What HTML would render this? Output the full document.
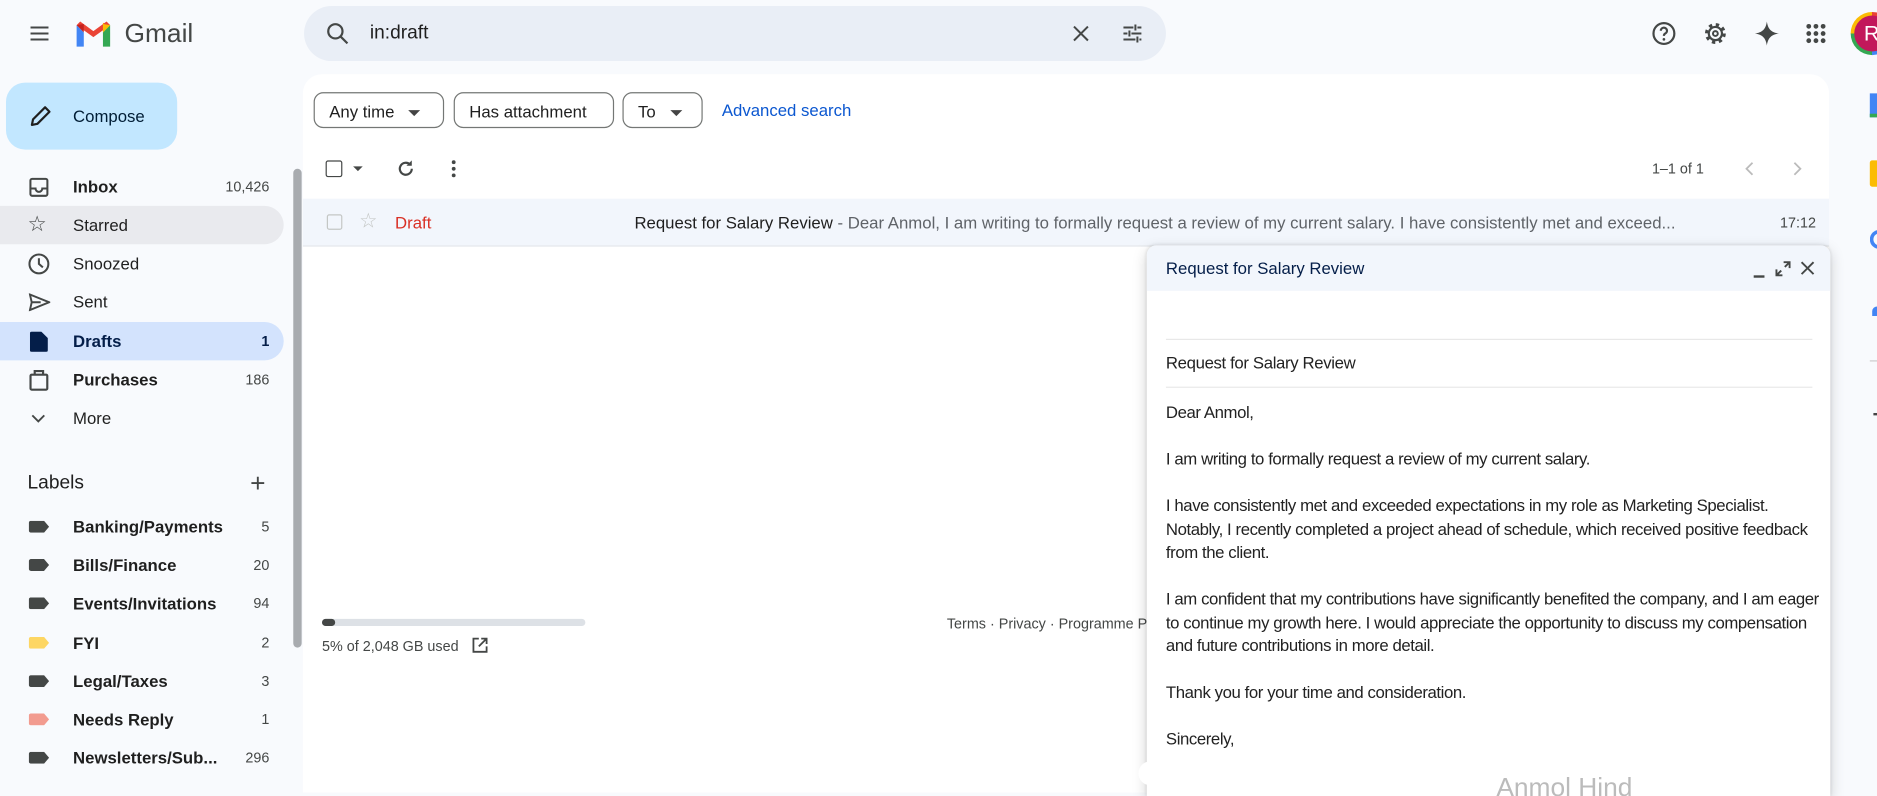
<!DOCTYPE html>
<html><head><meta charset="utf-8"><style>
html,body{margin:0;padding:0;width:1877px;height:780px;overflow:hidden;background:#f8fafd;}
#w{position:absolute;left:0;top:0;width:1568px;height:652px;transform:scale(1.19706);transform-origin:0 0;font-family:"Liberation Sans",Arial,sans-serif;color:#1f1f1f;}
.a{position:absolute;}
.nav{position:absolute;left:0;width:237px;height:32px;border-radius:0 16px 16px 0;}
.nt{position:absolute;left:61px;top:0;line-height:32px;font-size:14px;color:#1f1f1f;}
.nc{position:absolute;right:12px;top:0;line-height:32px;font-size:12px;color:#444746;}
.b{font-weight:bold;}
.lab{position:absolute;left:24px;top:11px;width:17px;height:10px;border-radius:2px 0 0 2px;clip-path:polygon(0 0,75% 0,100% 50%,75% 100%,0 100%);}
.chip{position:absolute;top:77px;height:30px;border:1px solid #747775;border-radius:8px;font-size:14px;line-height:30px;color:#1f1f1f;box-sizing:border-box;padding-left:12px;}
.car{display:inline-block;width:0;height:0;border-left:5px solid transparent;border-right:5px solid transparent;border-top:5px solid #444;margin-left:12px;vertical-align:middle;}
.body p{margin:0;font-size:14px;line-height:19.5px;color:#222;letter-spacing:-0.35px;white-space:nowrap;font-family:Arial,"Liberation Sans",sans-serif;}
</style></head><body><div id="w">
<svg class="a" style="left:23px;top:18px" width="20" height="20" viewBox="0 0 24 24"><path d="M3 6h18M3 12h18M3 18h18" stroke="#444746" stroke-width="2"/></svg>
<svg class="a" style="left:62px;top:17px" width="32" height="24" viewBox="0 0 32 24"><path d="M2 4v18h6V10z" fill="#4285f4"/><path d="M24 10v12h6V4z" fill="#34a853"/><path d="M24 2l6 2v0l-6 6z" fill="#fbbc04"/><path d="M2 4l14 10 14-10-3-3-11 8L5 1z" fill="#ea4335"/><path d="M30 4l-6 6V3z" fill="#fbbc04"/><path d="M2 4l6 6V3z" fill="#c5221f"/></svg>
<div class="a" style="left:104px;top:15px;font-size:22px;color:#444746;">Gmail</div>
<div class="a" style="left:254px;top:5px;width:720px;height:46px;border-radius:24px;background:#e9eef6;"></div>
<svg class="a" style="left:271px;top:17px" width="22" height="22" viewBox="0 0 24 24"><circle cx="10" cy="10" r="6.5" fill="none" stroke="#444746" stroke-width="2"/><path d="M15 15l6 6" stroke="#444746" stroke-width="2"/></svg>
<div class="a" style="left:309px;top:19px;font-size:16px;color:#1f1f1f;">in:draft</div>
<svg class="a" style="left:893px;top:18px" width="20" height="20" viewBox="0 0 24 24"><path d="M5 5l14 14M19 5L5 19" stroke="#444746" stroke-width="2"/></svg>
<svg class="a" style="left:936px;top:18px" width="20" height="20" viewBox="0 0 24 24"><path d="M3 6h10M17 6h4M3 12h4M11 12h10M3 18h12M19 18h2M15 3v6M9 9v6M17 15v6" stroke="#444746" stroke-width="2"/></svg>
<svg class="a" style="left:1379px;top:17px" width="22" height="22" viewBox="0 0 24 24"><circle cx="12" cy="12" r="9.5" fill="none" stroke="#444746" stroke-width="2"/><path d="M9.2 9.5a2.8 2.8 0 1 1 4 2.5c-1 .5-1.2 1.2-1.2 2.2" fill="none" stroke="#444746" stroke-width="2"/><circle cx="12" cy="17.3" r="1.2" fill="#444746"/></svg>
<svg class="a" style="left:1422px;top:17px" width="22" height="22" viewBox="0 0 24 24"><circle cx="12" cy="12" r="8" fill="none" stroke="#444746" stroke-width="3" stroke-dasharray="3 3.3"/><circle cx="12" cy="12" r="6" fill="none" stroke="#444746" stroke-width="2"/><circle cx="12" cy="12" r="2.2" fill="none" stroke="#444746" stroke-width="1.8"/></svg>
<svg class="a" style="left:1465px;top:17px" width="22" height="22" viewBox="0 0 24 24"><path d="M12 1C13 8 16 11 23 12 16 13 13 16 12 23 11 16 8 13 1 12 8 11 11 8 12 1z" fill="#444746"/></svg>
<svg class="a" style="left:1508px;top:19px" width="18" height="18" viewBox="0 0 18 18" fill="#444746"><circle cx="3" cy="3" r="2"/><circle cx="9" cy="3" r="2"/><circle cx="15" cy="3" r="2"/><circle cx="3" cy="9" r="2"/><circle cx="9" cy="9" r="2"/><circle cx="15" cy="9" r="2"/><circle cx="3" cy="15" r="2"/><circle cx="9" cy="15" r="2"/><circle cx="15" cy="15" r="2"/></svg>
<div class="a" style="left:1546px;top:10px;width:36px;height:36px;border-radius:50%;background:conic-gradient(#ea4335 0 25%,#4285f4 25% 50%,#34a853 50% 75%,#fbbc04 75%);"></div>
<div class="a" style="left:1549px;top:13px;width:30px;height:30px;border-radius:50%;background:#c2185b;color:#fff;font-size:18px;line-height:30px;text-indent:8px;">R</div>
<div class="a" style="left:5px;top:69px;width:143px;height:56px;border-radius:16px;background:#c2e7ff;"></div>
<svg class="a" style="left:23px;top:86px" width="22" height="22" viewBox="0 0 24 24"><path d="M4 20l1-5L16 4l4 4L9 19z" fill="none" stroke="#1f1f1f" stroke-width="2" stroke-linejoin="round"/></svg>
<div class="a" style="left:61px;top:89px;font-size:14px;font-weight:500;color:#001d35;">Compose</div>
<div class="nav" style="top:140px"><svg class="a" style="left:24px;top:8px" width="17" height="17" viewBox="0 0 18 18"><rect x="1.5" y="1.5" width="15" height="15" rx="1.5" fill="none" stroke="#444746" stroke-width="1.8"/><path d="M2 10h4a3 3 0 0 0 6 0h4" fill="none" stroke="#444746" stroke-width="1.8"/></svg><span class="nt b">Inbox</span><span class="nc">10,426</span></div>
<div class="nav" style="top:172px;background:#e9eaee"><span class="a" style="left:23px;top:5px;font-size:18px;color:#444746;">☆</span><span class="nt">Starred</span></div>
<div class="nav" style="top:204px"><svg class="a" style="left:23px;top:7px" width="19" height="19" viewBox="0 0 20 20"><circle cx="10" cy="10" r="8.3" fill="none" stroke="#444746" stroke-width="1.8"/><path d="M10 5v5l3.5 3" fill="none" stroke="#444746" stroke-width="1.8"/></svg><span class="nt">Snoozed</span></div>
<div class="nav" style="top:236px"><svg class="a" style="left:24px;top:9px" width="18" height="15" viewBox="0 0 18 15"><path d="M1 1l16 6.5L1 14l1.5-6.5z M2.5 7.5H10" fill="none" stroke="#444746" stroke-width="1.6"/></svg><span class="nt">Sent</span></div>
<div class="nav" style="top:269px;background:#d3e3fd"><svg class="a" style="left:25px;top:8px" width="15" height="17" viewBox="0 0 15 17"><path d="M1.5 0h8L15 5.5V15.5a1.5 1.5 0 0 1-1.5 1.5h-12A1.5 1.5 0 0 1 0 15.5V1.5A1.5 1.5 0 0 1 1.5 0z" fill="#041e49"/></svg><span class="nt b" style="color:#041e49">Drafts</span><span class="nc b" style="color:#041e49">1</span></div>
<div class="nav" style="top:301px"><svg class="a" style="left:24px;top:7px" width="17" height="19" viewBox="0 0 17 19"><rect x="1.5" y="5" width="14" height="12.5" rx="1" fill="none" stroke="#444746" stroke-width="1.8"/><path d="M5 5V2h7v3" fill="none" stroke="#444746" stroke-width="1.8"/></svg><span class="nt b">Purchases</span><span class="nc">186</span></div>
<div class="nav" style="top:333px"><svg class="a" style="left:26px;top:13px" width="12" height="8" viewBox="0 0 12 8"><path d="M1 1l5 5 5-5" fill="none" stroke="#444746" stroke-width="1.6"/></svg><span class="nt">More</span></div>
<div class="a" style="left:23px;top:395px;font-size:16px;color:#1f1f1f;">Labels</div>
<div class="a" style="left:209px;top:391px;font-size:22px;color:#444746;font-weight:300;">+</div>
<div class="nav" style="top:424px"><span class="lab" style="background:#444746"></span><span class="nt b">Banking/Payments</span><span class="nc">5</span></div>
<div class="nav" style="top:456px"><span class="lab" style="background:#444746"></span><span class="nt b">Bills/Finance</span><span class="nc">20</span></div>
<div class="nav" style="top:488px"><span class="lab" style="background:#444746"></span><span class="nt b">Events/Invitations</span><span class="nc">94</span></div>
<div class="nav" style="top:521px"><span class="lab" style="background:#fdd663"></span><span class="nt b">FYI</span><span class="nc">2</span></div>
<div class="nav" style="top:553px"><span class="lab" style="background:#444746"></span><span class="nt b">Legal/Taxes</span><span class="nc">3</span></div>
<div class="nav" style="top:585px"><span class="lab" style="background:#f29b8f"></span><span class="nt b">Needs Reply</span><span class="nc">1</span></div>
<div class="nav" style="top:617px"><span class="lab" style="background:#444746"></span><span class="nt b">Newsletters/Sub...</span><span class="nc">296</span></div>
<div class="a" style="left:245px;top:141px;width:7px;height:400px;border-radius:4px;background:#a8abaf;"></div>
<div class="a" style="left:253px;top:62px;width:1275px;height:600px;background:#fff;border-radius:16px 16px 0 0;"></div>
<div class="chip" style="left:262px;width:109px;">Any time<span class="car"></span></div>
<div class="chip" style="left:379px;width:134px;">Has attachment</div>
<div class="chip" style="left:520px;width:67px;">To<span class="car"></span></div>
<div class="a" style="left:603px;top:84px;font-size:14px;color:#0b57d0;font-weight:500;">Advanced search</div>
<div class="a" style="left:272px;top:134px;width:12px;height:12px;border:1.8px solid #444746;border-radius:2px;"></div>
<div class="a" style="left:295px;top:139px;border-left:4px solid transparent;border-right:4px solid transparent;border-top:4px solid #444746;"></div>
<svg class="a" style="left:331px;top:133px" width="16" height="16" viewBox="0 0 16 16"><path d="M13 8a5 5 0 1 1-1.5-3.6" fill="none" stroke="#444746" stroke-width="1.8"/><path d="M13 1v4.5H8.5z" fill="#444746"/></svg>
<svg class="a" style="left:376px;top:133px" width="6" height="16" viewBox="0 0 6 16" fill="#444746"><circle cx="3" cy="2.5" r="1.6"/><circle cx="3" cy="8" r="1.6"/><circle cx="3" cy="13.5" r="1.6"/></svg>
<div class="a" style="left:1380px;top:134px;font-size:12px;color:#444746;">1–1 of 1</div>
<svg class="a" style="left:1457px;top:134px" width="10" height="14" viewBox="0 0 10 14"><path d="M7 2L2 7l5 5" fill="none" stroke="#bbb" stroke-width="1.5"/></svg>
<svg class="a" style="left:1496px;top:134px" width="10" height="14" viewBox="0 0 10 14"><path d="M3 2l5 5-5 5" fill="none" stroke="#bbb" stroke-width="1.5"/></svg>
<div class="a" style="left:253px;top:166px;width:1275px;height:39px;background:#f2f6fc;border-bottom:1px solid #e5e7eb;"></div>
<div class="a" style="left:273px;top:179px;width:11px;height:11px;border:1.5px solid #c4c7c5;border-radius:2px;"></div>
<span class="a" style="left:300px;top:175px;font-size:17px;color:#c4c7c5;">☆</span>
<div class="a" style="left:330px;top:178px;font-size:14px;color:#d93025;">Draft</div>
<div class="a" style="left:530px;top:178px;font-size:14px;color:#1f1f1f;white-space:nowrap;">Request for Salary Review <span style="color:#5f6368">- Dear Anmol, I am writing to formally request a review of my current salary. I have consistently met and exceed...</span></div>
<div class="a" style="left:1487px;top:179px;font-size:12px;color:#444746;">17:12</div>
<div class="a" style="left:269px;top:517px;width:220px;height:6px;border-radius:3px;background:#dde1e6;"><div style="width:11px;height:6px;border-radius:3px;background:#444746"></div></div>
<div class="a" style="left:269px;top:533px;font-size:12px;color:#444746;">5% of 2,048 GB used</div>
<svg class="a" style="left:394px;top:532px" width="14" height="14" viewBox="0 0 14 14"><path d="M6 1.5H1.5v11h11V8M8 1.5h4.5V6M12.5 1.5L6 8" fill="none" stroke="#444746" stroke-width="1.5"/></svg>
<div class="a" style="left:791px;top:514px;font-size:12px;color:#444746;white-space:nowrap;">Terms · Privacy · Programme Policies</div>
<div class="a" style="left:1536px;top:62px;width:32px;height:600px;background:#f8fafd;"></div>
<div class="a" style="left:1562px;top:78px;width:8px;height:20px;background:#4285f4;border-bottom:3px solid #34a853;box-sizing:border-box;"></div>
<div class="a" style="left:1562px;top:134px;width:8px;height:22px;background:#fbbc04;border-radius:2px 0 0 2px;"></div>
<div class="a" style="left:1562px;top:192px;width:8px;height:16px;border:3px solid #4285f4;border-right:none;border-radius:8px 0 0 8px;box-sizing:border-box;"></div>
<div class="a" style="left:1564px;top:256px;width:6px;height:8px;background:#4285f4;border-radius:4px 0 0 0;"></div>
<div class="a" style="left:1562px;top:301px;width:8px;height:1px;background:#ccc;"></div>
<div class="a" style="left:1565px;top:345px;width:5px;height:2px;background:#444;"></div>
<div class="a" style="left:946px;top:255px;width:20px;height:18px;background:#fff;border-radius:8px 0 0 8px;"></div>
<div class="a" style="left:958px;top:205px;width:571px;height:460px;background:#fff;border-radius:8px 8px 0 0;box-shadow:0 4px 12px rgba(0,0,0,.18),0 0 3px rgba(0,0,0,.12);overflow:hidden;">
<div style="height:38px;background:#f2f6fc;"></div>
<div class="a" style="left:16px;top:11px;font-size:14px;color:#041e49;font-weight:500;">Request for Salary Review</div>
<div class="a" style="left:507px;top:25px;width:9px;height:2px;background:#444746;"></div>
<svg class="a" style="left:525px;top:13px" width="13" height="13" viewBox="0 0 13 13"><path d="M7 1h5v5M12 1L8 5M6 12H1V7M1 12l4-4" fill="none" stroke="#444746" stroke-width="1.6"/></svg>
<svg class="a" style="left:546px;top:13px" width="12" height="12" viewBox="0 0 12 12"><path d="M1 1l10 10M11 1L1 11" stroke="#444746" stroke-width="1.6"/></svg>
<div class="a" style="left:16px;top:78px;width:540px;height:1px;background:#e8e8e8;"></div>
<div class="a" style="left:16px;top:90px;font-size:14px;color:#222;letter-spacing:-0.3px;">Request for Salary Review</div>
<div class="a" style="left:16px;top:118px;width:540px;height:1px;background:#e8e8e8;"></div>
<div class="a body" style="left:16px;top:130px;width:545px;">
<p>Dear Anmol,</p><p>&nbsp;</p>
<p>I am writing to formally request a review of my current salary.</p><p>&nbsp;</p>
<p>I have consistently met and exceeded expectations in my role as Marketing Specialist.<br>Notably, I recently completed a project ahead of schedule, which received positive feedback<br>from the client.</p><p>&nbsp;</p>
<p>I am confident that my contributions have significantly benefited the company, and I am eager<br>to continue my growth here. I would appreciate the opportunity to discuss my compensation<br>and future contributions in more detail.</p><p>&nbsp;</p>
<p>Thank you for your time and consideration.</p><p>&nbsp;</p>
<p>Sincerely,</p>
</div>
<div class="a" style="left:292px;top:440px;font-size:22px;color:#bbb;">Anmol Hind</div>
</div>
<div class="a" style="left:951px;top:636px;width:20px;height:20px;background:#fff;border-radius:10px;"></div>
</div></body></html>
